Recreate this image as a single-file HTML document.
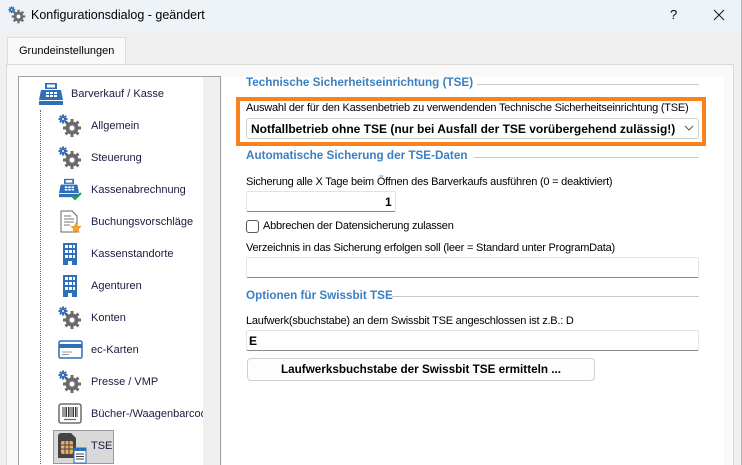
<!DOCTYPE html>
<html><head><meta charset="utf-8"><style>
*{margin:0;padding:0;box-sizing:border-box}
html,body{width:742px;height:465px;overflow:hidden}
body{background:#f0f0f0;font-family:"Liberation Sans",sans-serif;font-size:11px;color:#000;position:relative}
.a{position:absolute}
.t{position:absolute;white-space:nowrap}
.n{letter-spacing:-0.22px}
.hdr{color:#3c7fc1;font-weight:bold;font-size:11.7px}
.line{position:absolute;height:1px;background:#c8c8c8}
.inp{position:absolute;background:#fff;border:1px solid #e3e3e3;border-bottom:1px solid #8a8a8a;border-radius:2px}
.item{position:absolute;left:0;white-space:nowrap;font-size:11px;color:#1a1a40}
</style></head><body>
<svg width="0" height="0" style="position:absolute">
<defs>
<symbol id="gear" viewBox="0 0 24 24">
<g fill="#2f6fb5"><circle cx="5" cy="5" r="2.6"/><rect x="4" y="0.5" width="2" height="9"/><rect x="0.5" y="4" width="9" height="2"/><rect x="4" y="0.5" width="2" height="9" transform="rotate(45 5 5)"/><rect x="4" y="0.5" width="2" height="9" transform="rotate(-45 5 5)"/></g>
<circle cx="5" cy="5" r="1" fill="#fff"/>
<g fill="#6b6b6b"><circle cx="14" cy="14" r="6.5"/><rect x="12.5" y="5" width="3" height="18"/><rect x="5" y="12.5" width="18" height="3"/><rect x="12.5" y="5" width="3" height="18" transform="rotate(45 14 14)"/><rect x="12.5" y="5" width="3" height="18" transform="rotate(-45 14 14)"/></g>
<circle cx="14" cy="14" r="2.6" fill="#fff"/>
</symbol>
<symbol id="bld" viewBox="0 0 24 24">
<rect x="5" y="1" width="14" height="22" fill="#2f6fb5"/>
<g fill="#fff"><rect x="7" y="3" width="3" height="3"/><rect x="11" y="3" width="3" height="3"/><rect x="15" y="3" width="2" height="3"/><rect x="7" y="8" width="3" height="3"/><rect x="11" y="8" width="3" height="3"/><rect x="15" y="8" width="2" height="3"/><rect x="7" y="13" width="3" height="3"/><rect x="11" y="13" width="3" height="3"/><rect x="15" y="13" width="2" height="3"/><rect x="10" y="19" width="4" height="4"/></g>
</symbol>
<symbol id="reg" viewBox="0 0 26 24">
<rect x="7" y="1" width="12" height="6" fill="#2f6fb5"/><rect x="9" y="2.5" width="8" height="3" fill="#fff"/>
<path d="M3 8h20l2 10H1z" fill="#2f6fb5"/>
<g fill="#fff"><rect x="8" y="10" width="3" height="2"/><rect x="12" y="10" width="3" height="2"/><rect x="16" y="10" width="3" height="2"/><rect x="8" y="13" width="3" height="2"/><rect x="12" y="13" width="3" height="2"/><rect x="16" y="13" width="3" height="2"/></g>
<rect x="1" y="19" width="24" height="4" fill="#2f6fb5"/>
</symbol>
</defs></svg>

<div class="a" style="left:0;top:0;width:742px;height:31px;background:#eef3f8"></div>
<svg class="a" style="left:8px;top:6px" width="18" height="18"><use href="#gear" width="18" height="18"/></svg>
<div class="t" style="left:31px;top:8px;font-size:12.5px">Konfigurationsdialog - geändert</div>
<div class="t" style="left:670px;top:7px;font-size:13px">?</div>
<svg class="a" style="left:713px;top:9px" width="12" height="12"><path d="M1 1L11 11M11 1L1 11" stroke="#222" stroke-width="1.1"/></svg>
<div class="a" style="left:741px;top:0;width:1px;height:465px;background:#b5b5b5"></div>

<div class="a" style="left:7px;top:37px;width:119px;height:28px;background:#f9f9f9;border:1px solid #dcdcdc;border-bottom:none"></div>
<div class="t" style="left:19px;top:45px">Grundeinstellungen</div>
<div class="a" style="left:6px;top:64px;width:728px;height:410px;background:#f9f9f9;border:1px solid #d9d9d9"></div>
<div class="a" style="left:126px;top:64px;width:608px;height:1px;background:#d9d9d9"></div>

<div class="a" style="left:18px;top:76px;width:203px;height:400px;background:#fff;border:1px solid #a0a0a0"></div>
<div class="a" style="left:203px;top:77px;width:17px;height:390px;background:#f0f0f0"></div>
<div class="a" style="left:40px;top:110px;width:0;height:360px;border-left:1px dotted #666"></div>

<svg class="a" style="left:38px;top:82px" width="26" height="24"><use href="#reg" width="26" height="24"/></svg>
<div class="item" style="left:71px;top:88px">Barverkauf / Kasse</div>

<svg class="a" style="left:58px;top:114px" width="24" height="24"><use href="#gear" width="24" height="24"/></svg>
<div class="item" style="left:91px;top:120px">Allgemein</div>
<svg class="a" style="left:58px;top:146px" width="24" height="24"><use href="#gear" width="24" height="24"/></svg>
<div class="item" style="left:91px;top:152px">Steuerung</div>
<svg class="a" style="left:58px;top:178px" width="26" height="24"><use href="#reg" width="22" height="20"/><path d="M14 18l3 3 6-6" stroke="#2a9a4a" stroke-width="2.2" fill="none"/></svg>
<div class="item" style="left:91px;top:184px">Kassenabrechnung</div>
<svg class="a" style="left:58px;top:210px" width="24" height="24"><path d="M3 1h11l5 5v16H3z" fill="#fff" stroke="#666"/><path d="M6 6h7M6 9h10M6 12h10M6 15h6" stroke="#777"/><path d="M18 12l1.8 3.8 4 .5-3 2.8.8 4-3.6-2-3.6 2 .8-4-3-2.8 4-.5z" fill="#f0a030"/></svg>
<div class="item" style="left:91px;top:216px">Buchungsvorschläge</div>
<svg class="a" style="left:58px;top:242px" width="24" height="24"><use href="#bld" width="24" height="24"/></svg>
<div class="item" style="left:91px;top:248px">Kassenstandorte</div>
<svg class="a" style="left:58px;top:274px" width="24" height="24"><use href="#bld" width="24" height="24"/></svg>
<div class="item" style="left:91px;top:280px">Agenturen</div>
<svg class="a" style="left:58px;top:306px" width="24" height="24"><use href="#gear" width="24" height="24"/></svg>
<div class="item" style="left:91px;top:312px">Konten</div>
<svg class="a" style="left:58px;top:340px" width="26" height="20"><rect x="1" y="1" width="23" height="17" rx="1.5" fill="#fff" stroke="#2f6fb5" stroke-width="1.5"/><rect x="1" y="4" width="23" height="4" fill="#2f6fb5"/><path d="M4 12h10M4 14.5h7" stroke="#999"/></svg>
<div class="item" style="left:91px;top:344px">ec-Karten</div>
<svg class="a" style="left:58px;top:370px" width="24" height="24"><use href="#gear" width="24" height="24"/></svg>
<div class="item" style="left:91px;top:376px">Presse / VMP</div>
<svg class="a" style="left:58px;top:403px" width="24" height="22"><rect x="1" y="1" width="22" height="19" rx="2" fill="#fff" stroke="#555" stroke-width="1.3"/><path d="M5 4v10M7 4v10M8.5 4v10M10.5 4v10M12 4v10M14 4v10M15.5 4v10M17.5 4v10M19 4v10" stroke="#333"/><path d="M6 16.5h12" stroke="#666" stroke-width="1.2"/></svg>
<div class="item" style="left:91px;top:408px;width:112px;overflow:hidden">Bücher-/Waagenbarcode</div>
<div class="a" style="left:53px;top:430px;width:61px;height:34px;background:#d9d9d9;border:1px solid #999"></div>
<svg class="a" style="left:56px;top:432px" width="32" height="32"><path d="M2 4a3 3 0 0 1 3-3h10l5 5v20H2z" fill="#444"/><rect x="5" y="9" width="12" height="13" rx="2" fill="#e8b060"/><path d="M5 13h12M5 17h12M9 9v13M13 9v13" stroke="#444"/><rect x="18" y="16" width="12" height="15" fill="#fff" stroke="#2f6fb5"/><rect x="18" y="16" width="12" height="3" fill="#2f6fb5"/><path d="M20 22h8M20 24.5h8M20 27h8" stroke="#444"/></svg>
<div class="item" style="left:91px;top:440px">TSE</div>

<div class="a" style="left:222px;top:77px;width:502px;height:390px;background:#fff"></div>
<div class="t hdr" style="left:246px;top:76px">Technische Sicherheitseinrichtung (TSE)</div>
<div class="line" style="left:477px;top:84px;width:222px"></div>

<div class="a" style="left:236px;top:97px;width:470px;height:49px;border:4px solid #f7821e"></div>
<div class="t n" style="left:246px;top:102px">Auswahl der für den Kassenbetrieb zu verwendenden Technische Sicherheitseinrichtung (TSE)</div>
<div class="inp" style="left:246px;top:118px;width:453px;height:21px;border:1px solid #d0d0d0;border-radius:3px"></div>
<div class="t" style="left:251px;top:122px;font-weight:bold;font-size:12px">Notfallbetrieb ohne TSE (nur bei Ausfall der TSE vorübergehend zulässig!)</div>
<svg class="a" style="left:684px;top:125px" width="10" height="7"><path d="M1 1l4 4 4-4" stroke="#555" fill="none"/></svg>

<div class="t hdr" style="left:246px;top:149px">Automatische Sicherung der TSE-Daten</div>
<div class="line" style="left:474px;top:157px;width:225px"></div>

<div class="t n" style="left:246px;top:176px">Sicherung alle X Tage beim Öffnen des Barverkaufs ausführen (0 = deaktiviert)</div>
<div class="inp" style="left:246px;top:191px;width:150px;height:21px"></div>
<div class="t" style="left:385px;top:195px;font-weight:bold;font-size:12px">1</div>

<div class="a" style="left:246px;top:220px;width:13px;height:13px;border:1px solid #555;border-radius:3px;background:#fff"></div>
<div class="t n" style="left:263px;top:220px">Abbrechen der Datensicherung zulassen</div>
<div class="t n" style="left:246px;top:242px">Verzeichnis in das Sicherung erfolgen soll (leer = Standard unter ProgramData)</div>
<div class="inp" style="left:246px;top:257px;width:453px;height:21px"></div>

<div class="t hdr" style="left:246px;top:289px">Optionen für Swissbit TSE</div>
<div class="line" style="left:392px;top:296px;width:307px"></div>

<div class="t n" style="left:246px;top:315px">Laufwerk(sbuchstabe) an dem Swissbit TSE angeschlossen ist z.B.: D</div>
<div class="inp" style="left:246px;top:330px;width:453px;height:21px"></div>
<div class="t" style="left:249px;top:334px;font-weight:bold;font-size:12px">E</div>
<div class="a" style="left:247px;top:358px;width:348px;height:23px;background:#fdfdfd;border:1px solid #d0d0d0;border-radius:4px"></div>
<div class="t" style="left:247px;top:363px;width:348px;text-align:center;font-weight:bold;font-size:11.7px">Laufwerksbuchstabe der Swissbit TSE ermitteln ...</div>
</body></html>
